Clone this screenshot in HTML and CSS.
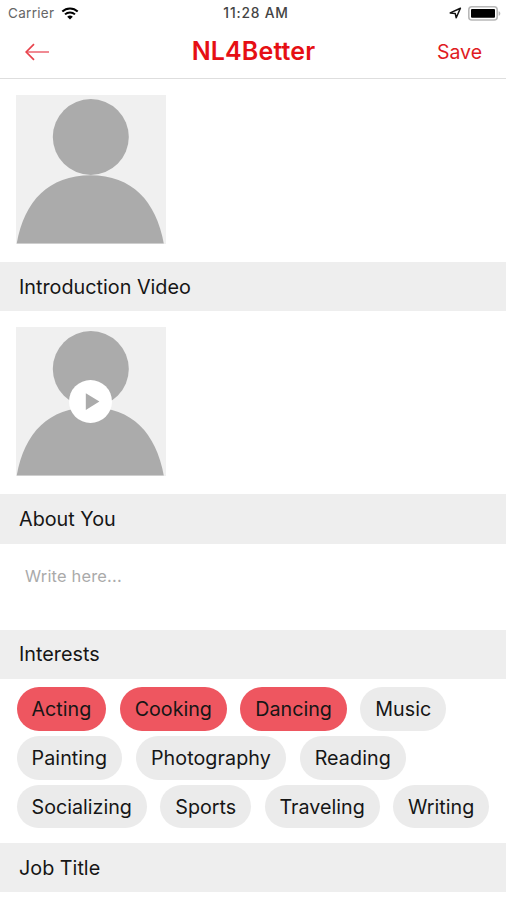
FILE: index.html
```html
<!DOCTYPE html>
<html lang="en">
<head>
    <meta charset="UTF-8">
    <meta name="viewport" content="width=device-width, initial-scale=1.0">
    <title>NL4Better</title>
    <link rel="stylesheet" href="styles.css">
</head>
<body>
    <div class="status-bar">
        <div class="status-left">
            <span class="carrier">Carrier</span>
            <svg class="wifi" width="18" height="13" viewBox="0 0 18 13">
                <path d="M1.3 4.6a11.2 11.2 0 0 1 15.4 0M4 7.4a7.2 7.2 0 0 1 10 0" fill="none" stroke="#000" stroke-width="2"/>
                <path d="M9 12.6L6.2 9.8a4 4 0 0 1 5.6 0z"/>
            </svg>
        </div>
        <span class="clock">11:28 AM</span>
        <div class="status-right">
            <svg class="location" width="13" height="12" viewBox="0 0 13 12">
                <path d="M11.4 1.2L1.2 5.9l5 .5 1 4.4z" fill="none" stroke="#111" stroke-width="1.5" stroke-linejoin="round"/>
            </svg>
            <svg class="battery" width="33" height="15" viewBox="0 0 33 15">
                <rect x=".8" y=".8" width="28.4" height="13.2" rx="3" fill="#fff" stroke="#b8b8b8" stroke-width="1.6"/>
                <rect x="3" y="3" width="24" height="8.8" rx="1"/>
                <path d="M30.6 5.2c2.3.6 2.3 4 0 4.6z" fill="#b8b8b8"/>
            </svg>
        </div>
    </div>
    <header class="nav">
        <button class="back" aria-label="Back">
            <svg width="25" height="18" viewBox="0 0 25 18">
                <path d="M1.5 9H24" stroke="#f08a93" stroke-width="2"/>
                <path d="M9 1.2L1.2 9L9 16.8" fill="none" stroke="#e8434c" stroke-width="1.7"/>
            </svg>
        </button>
        <h1 class="title">NL4Better</h1>
        <button class="save">Save</button>
    </header>

    <div class="media">
        <div class="photo">
            <svg class="avatar" width="150" height="149" viewBox="0 0 150 149">
                <circle cx="74.8" cy="42" r="38"/>
                <path d="M.7 148.5C8 106 33 80.2 74.5 80.2S140 106 147.8 148.5z"/>
            </svg>
        </div>
    </div>

    <h2 class="section">Introduction Video</h2>
    <div class="media">
        <div class="photo">
            <svg class="avatar" width="150" height="149" viewBox="0 0 150 149">
                <circle cx="74.8" cy="42" r="38"/>
                <path d="M.7 148.5C8 106 33 80.2 74.5 80.2S140 106 147.8 148.5z"/>
            </svg>
            <svg class="play" width="43" height="43" viewBox="0 0 43 43">
                <circle cx="21.5" cy="21.5" r="21.5" fill="#fff"/>
                <path d="M16.8 13.3L30.4 21.6L16.8 30z" fill="#ababab"/>
            </svg>
        </div>
    </div>

    <h2 class="section">About You</h2>
    <textarea class="about" placeholder="Write here..."></textarea>

    <h2 class="section">Interests</h2>
    <div class="interests">
        <div class="row">
            <span class="chip selected">Acting</span>
            <span class="chip selected">Cooking</span>
            <span class="chip selected">Dancing</span>
            <span class="chip">Music</span>
        </div>
        <div class="row">
            <span class="chip">Painting</span>
            <span class="chip">Photography</span>
            <span class="chip">Reading</span>
        </div>
        <div class="row">
            <span class="chip">Socializing</span>
            <span class="chip">Sports</span>
            <span class="chip">Traveling</span>
            <span class="chip">Writing</span>
        </div>
    </div>

    <h2 class="section">Job Title</h2>
</body>
</html>
```

FILE: styles.css
```css
* {
    box-sizing: border-box;
}
body {
    margin: 0;
    background-color: #fff;
    color: #161616;
    font-family: Inter, "Liberation Sans", sans-serif;
    height: 900px;
    overflow: hidden;
}
button {
    border: none;
    background: none;
    padding: 0;
    font-family: inherit;
}
.status-bar {
    display: grid;
    grid-template-columns: 1fr auto 1fr;
    align-items: center;
    height: 26px;
    padding: 0 5px 0 8px;
    font-size: 13.5px;
}
.status-left,
.status-right {
    display: flex;
    align-items: center;
}
.status-left {
    gap: 7px;
}
.status-right {
    justify-content: flex-end;
    gap: 6px;
}
.carrier {
    color: #666;
    letter-spacing: 0.3px;
}
.clock {
    padding-left: 3px;
    font-size: 13.8px;
    font-weight: 500;
    letter-spacing: 0.8px;
    color: #444;
}
.nav {
    display: grid;
    grid-template-columns: 1fr auto 1fr;
    align-items: center;
    height: 53px;
    padding: 0 24px 0 25px;
    border-bottom: 1px solid #dedede;
}
.back {
    display: flex;
}
.title {
    margin: 0;
    padding-bottom: 2px;
    font-size: 25px;
    font-weight: 600;
    letter-spacing: 0.15px;
    color: #e60f14;
}
.save {
    justify-self: end;
    font-size: 19.5px;
    color: #e01b22;
}
.media {
    padding: 16px 16px 18px;
}
.photo {
    position: relative;
    width: 150px;
    height: 149px;
    background-color: #f0f0f0;
}
.avatar {
    display: block;
    fill: #ababab;
}
.play {
    position: absolute;
    left: 53px;
    top: 53px;
}
.section {
    display: flex;
    align-items: center;
    height: 49.3px;
    margin: 0;
    padding: 0 19px;
    background-color: #eee;
    font-size: 19.8px;
    font-weight: 400;
}
.about {
    display: block;
    width: 100%;
    height: 86px;
    padding: 22px 25px;
    border: none;
    resize: none;
    font-family: inherit;
    font-size: 16.4px;
    letter-spacing: 0.2px;
}
.about::placeholder {
    color: #aaa;
}
.interests {
    display: flex;
    flex-direction: column;
    gap: 5px;
    padding: 8.2px 16.5px 14.6px;
}
.row {
    display: flex;
    gap: 13.4px;
}
.row:nth-child(2) {
    gap: 13.8px;
}
.row:nth-child(2) .chip {
    letter-spacing: 0.08px;
}
.chip {
    display: flex;
    align-items: center;
    height: 43.8px;
    padding: 0 15px;
    border-radius: 22px;
    background-color: #ebebeb;
    font-size: 19.7px;
}
.chip.selected {
    background-color: #ee5660;
}
```
